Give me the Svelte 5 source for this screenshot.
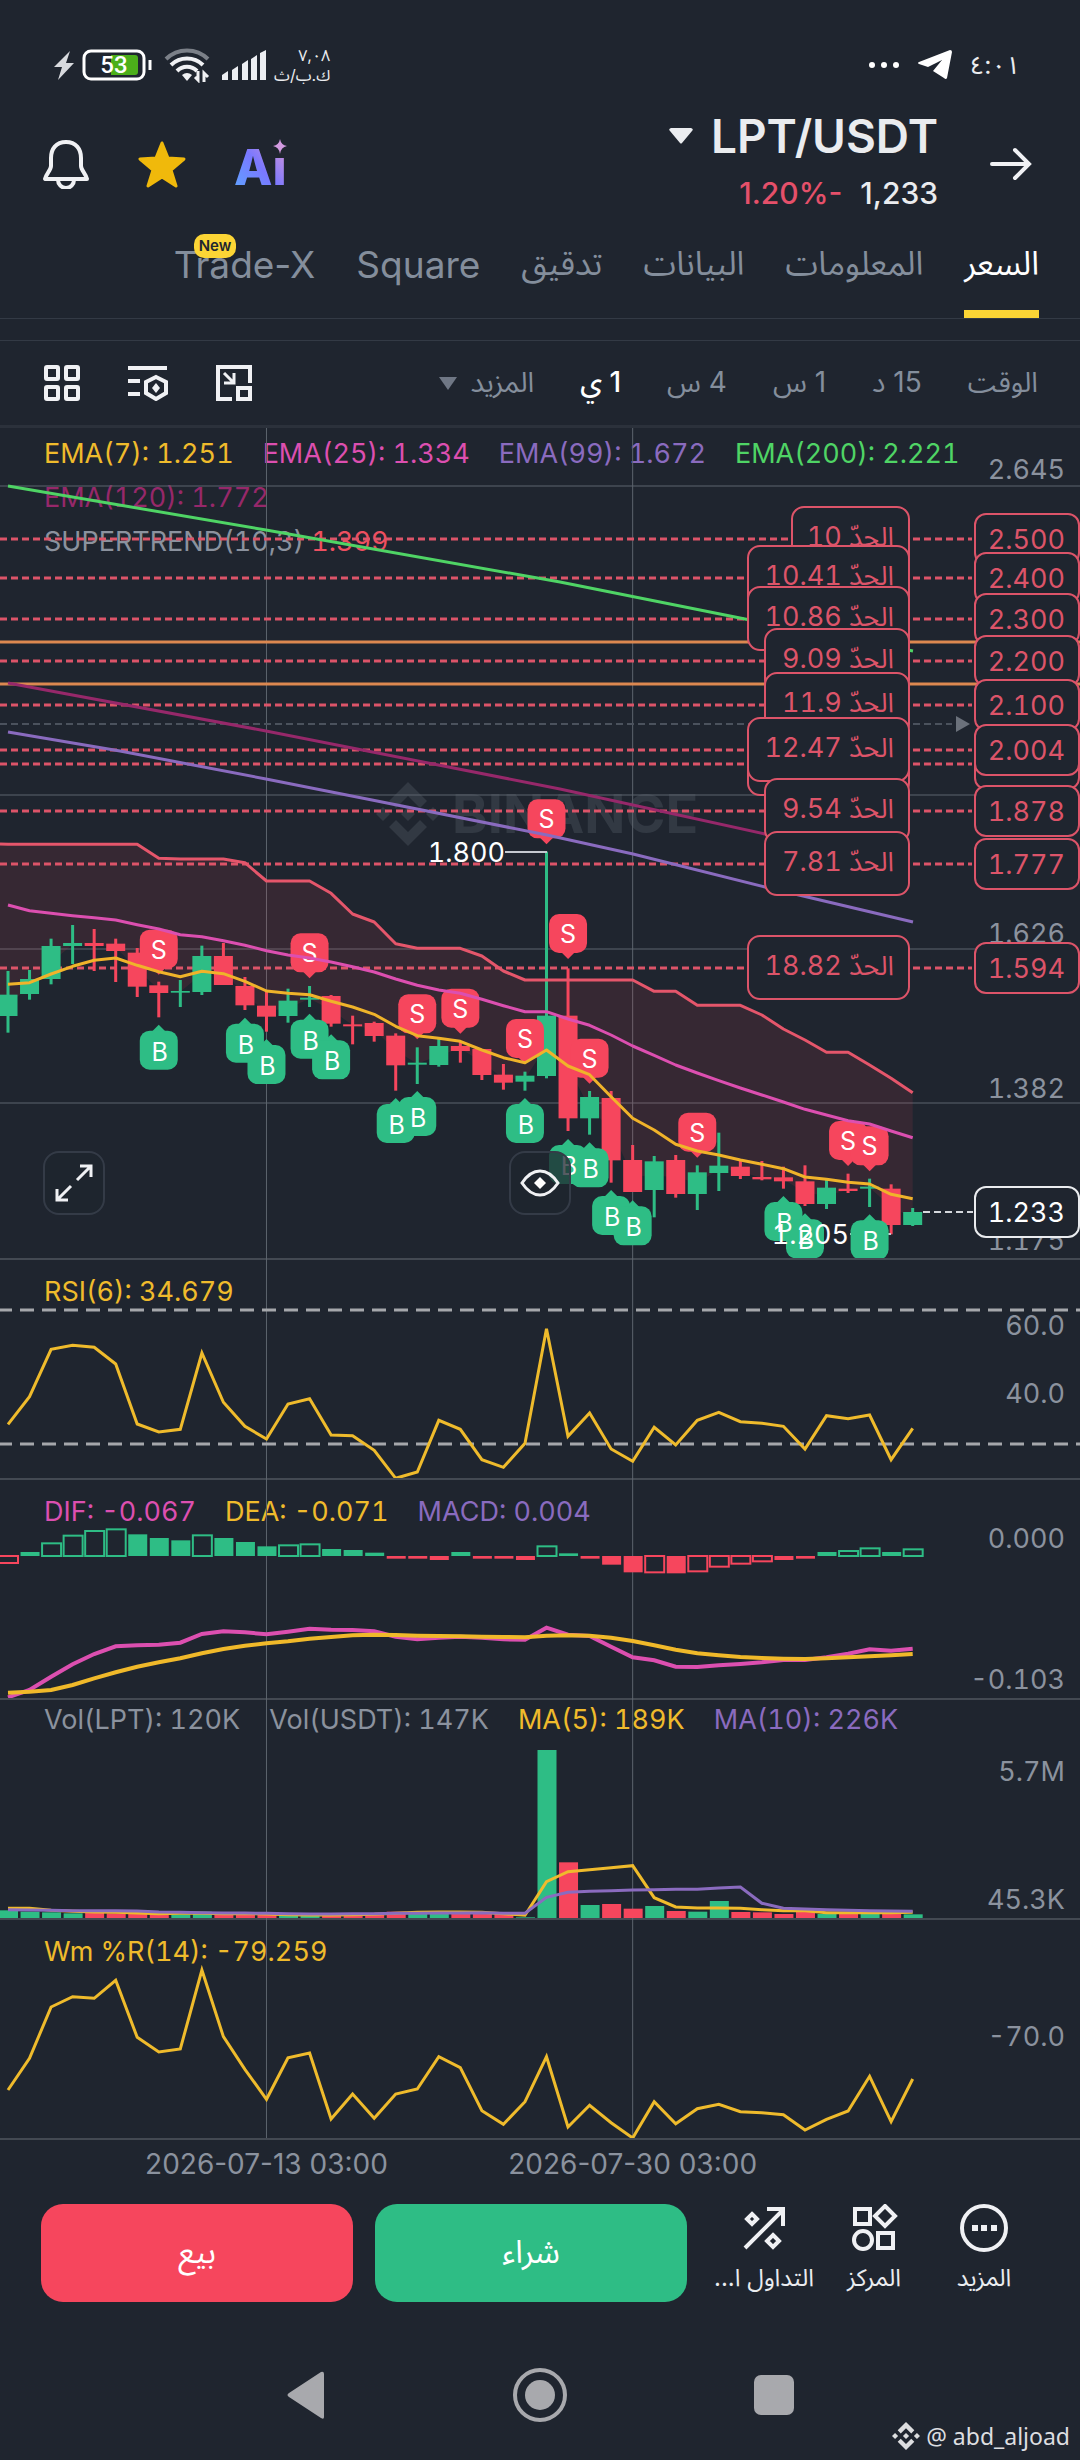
<script lang="ts">
  const STEP = 21.54;
  const x = (i: number) => 8 + i * STEP;

  // Series values are stored in thirds of a pixel, measured down the pane.
  const priceY = (v: number) => 372 + v / 3;
  const upperY = (v: number) => 2 + v / 3;
  const lowerY = (v: number) => v / 3 - 218;

  function line(values: number[], y: (v: number) => number): string {
    return values.map((v, i) => `${x(i).toFixed(1)},${y(v).toFixed(1)}`).join(' ');
  }

  const tabs = [
    { label: 'السعر' },
    { label: 'المعلومات' },
    { label: 'البيانات' },
    { label: 'تدقيق' },
    { label: 'Square', latin: true },
    { label: 'Trade-X', latin: true, isNew: true }
  ];
  const intervals = ['الوقت', '15 د', '1 س', '4 س', '1 ي'];

  let activeTab = $state('السعر');
  let activeInterval = $state('1 ي');

  // high, body top, body bottom, low, 1 = up
  const candles = [
    [513, 584, 648, 698, 1], [510, 537, 582, 599, 1], [416, 438, 537, 553, 1],
    [375, 429, 438, 492, 1], [387, 429, 438, 513, 0], [416, 431, 453, 546, 0],
    [444, 458, 560, 591, 0], [545, 556, 579, 652, 0], [540, 573, 578, 621, 1],
    [437, 468, 576, 585, 1], [429, 468, 555, 555, 0], [531, 558, 616, 630, 0],
    [575, 617, 650, 695, 0], [566, 602, 648, 668, 1], [558, 593, 599, 621, 1],
    [585, 588, 671, 680, 0], [647, 673, 679, 733, 0], [665, 669, 708, 725, 0],
    [700, 707, 796, 872, 0], [742, 788, 794, 852, 1], [715, 738, 795, 800, 1],
    [725, 738, 753, 788, 0], [747, 747, 825, 840, 0], [792, 824, 848, 869, 0],
    [815, 827, 845, 872, 1], [155, 647, 828, 835, 1], [505, 647, 955, 993, 0],
    [873, 891, 955, 1004, 1], [873, 894, 1081, 1148, 0], [1035, 1080, 1176, 1176, 0],
    [1068, 1084, 1170, 1252, 1], [1065, 1080, 1182, 1193, 0], [1096, 1117, 1182, 1230, 1],
    [998, 1097, 1119, 1173, 1], [1080, 1100, 1128, 1137, 0], [1083, 1131, 1138, 1141, 0],
    [1100, 1132, 1144, 1166, 0], [1096, 1144, 1212, 1218, 0], [1136, 1163, 1212, 1227, 1],
    [1121, 1166, 1173, 1179, 0], [1136, 1160, 1166, 1221, 1], [1153, 1166, 1275, 1303, 0],
    [1224, 1236, 1275, 1278, 1]
  ];

  const ema7 = [
    553, 548, 522, 499, 481, 474, 496, 515, 530, 514, 521, 544, 573, 580, 584, 604, 621, 643, 679,
    707, 715, 724, 750, 773, 788, 750, 798, 824, 890, 955, 990, 1033, 1053, 1065, 1080, 1093, 1106,
    1131, 1138, 1147, 1152, 1183, 1196
  ];
  const ema25 = [
    315, 332, 340, 347, 353, 360, 374, 387, 404, 410, 422, 436, 452, 465, 474, 486, 500, 516, 537,
    556, 570, 580, 598, 617, 635, 635, 657, 676, 705, 738, 766, 795, 819, 842, 864, 885, 906, 928,
    945, 962, 972, 993, 1013
  ];
  const supertrend = [
    133, 133, 133, 133, 133, 133, 133, 175, 177, 177, 177, 188, 243, 243, 243, 280, 342, 366, 431,
    445, 445, 445, 468, 513, 540, 540, 540, 540, 540, 540, 574, 574, 616, 616, 616, 645, 687, 720,
    757, 757, 795, 835, 878
  ];

  const trendLine = `0,416 ${line(supertrend, priceY)}`;
  const trendBase = candles
    .map((c, i) => `${x(i).toFixed(1)},${priceY((c[1] + c[2]) / 2).toFixed(1)}`)
    .reverse()
    .join(' ');
  const trendArea = `${trendLine} ${trendBase} 0,577`;

  const levels = [
    { y: 111, left: 792, label: 'الحدّ 10', price: '2.500' },
    { y: 150, left: 748, label: 'الحدّ 10.41', price: '2.400' },
    { y: 191, left: 748, label: 'الحدّ 10.86', price: '2.300' },
    { y: 233, left: 765, label: 'الحدّ 9.09', price: '2.200' },
    { y: 277, left: 765, label: 'الحدّ 11.9', price: '2.100' },
    { y: 336, left: 748, label: '', price: '' },
    { y: 322, left: 748, label: 'الحدّ 12.47', price: '2.004' },
    { y: 383, left: 765, label: 'الحدّ 9.54', price: '1.878' },
    { y: 436, left: 765, label: 'الحدّ 7.81', price: '1.777' },
    { y: 540, left: 748, label: 'الحدّ 18.82', price: '1.594' }
  ];

  // candle index, tip position
  const sells = [
    [7, 524], [14, 535], [19, 718], [21, 701], [24, 792], [25, 133], [26, 477], [27, 851],
    [32, 1073], [39, 1098], [40, 1114]
  ];
  const buys = [
    [7, 674], [11, 653], [12, 717], [14, 641], [15, 703], [18, 894], [19, 873], [24, 894],
    [26, 1017], [27, 1027], [28, 1170], [29, 1201], [36, 1188], [37, 1240], [40, 1243]
  ];

  const rsi = [
    493, 410, 268, 256, 262, 312, 492, 516, 508, 279, 427, 499, 537, 432, 416, 525, 527, 571, 655,
    636, 481, 508, 599, 622, 550, 206, 529, 459, 567, 604, 502, 555, 481, 457, 485, 490, 499, 567,
    467, 476, 465, 599, 505
  ];

  const MACD_ZERO = 888;
  // bar end, 1 = hollow
  const macdBars = [
    [909, 1], [876, 0], [850, 1], [827, 1], [813, 1], [808, 1], [823, 0], [834, 0], [841, 0],
    [826, 1], [834, 0], [846, 0], [859, 0], [856, 1], [853, 1], [867, 0], [870, 0], [878, 0],
    [896, 0], [896, 0], [900, 0], [876, 0], [896, 0], [896, 0], [900, 0], [859, 1], [880, 0],
    [896, 0], [914, 0], [937, 0], [937, 1], [940, 0], [934, 1], [920, 1], [911, 1], [904, 1],
    [900, 0], [896, 0], [876, 0], [873, 1], [865, 1], [876, 0], [868, 1]
  ];
  const dif = [
    1312, 1290, 1250, 1213, 1182, 1159, 1156, 1154, 1148, 1122, 1114, 1117, 1123, 1115, 1106, 1109,
    1110, 1114, 1130, 1138, 1133, 1130, 1133, 1138, 1139, 1103, 1124, 1128, 1160, 1192, 1201, 1220,
    1221, 1216, 1212, 1207, 1200, 1200, 1192, 1181, 1168, 1172, 1166
  ];
  const dea = [
    1298, 1295, 1290, 1275, 1255, 1237, 1220, 1207, 1195, 1180, 1167, 1157, 1150, 1144, 1136, 1131,
    1126, 1124, 1125, 1127, 1128, 1129, 1130, 1131, 1132, 1127, 1126, 1127, 1133, 1143, 1156, 1169,
    1180, 1186, 1191, 1194, 1196, 1197, 1195, 1192, 1189, 1186, 1182
  ];

  const VOLUME_BASE = 654;
  const volumes = [
    631, 635, 637, 640, 638, 640, 641, 642, 643, 635, 642, 642, 642, 644, 645, 645, 640, 640, 635,
    638, 640, 638, 636, 642, 652, 150, 487, 615, 612, 626, 618, 633, 635, 603, 636, 637, 642, 636,
    642, 637, 642, 637, 643
  ];
  const ma5 = [
    625, 625, 631, 634, 636, 637, 639, 641, 640, 640, 641, 641, 642, 644, 645, 645, 644, 643, 640,
    637, 636, 636, 637, 641, 646, 545, 515, 509, 503, 497, 593, 621, 624, 624, 625, 629, 632, 632,
    638, 638, 638, 638, 637
  ];
  const ma10 = [
    629, 630, 631, 632, 632, 632, 633, 636, 637, 638, 639, 639, 640, 641, 642, 642, 641, 641, 640,
    640, 639, 639, 638, 640, 640, 592, 577, 574, 572, 570, 569, 568, 568, 564, 561, 610, 625, 627,
    629, 631, 632, 633, 634
  ];

  const williams = [
    1170, 1075, 921, 890, 895, 841, 1012, 1056, 1047, 810, 1010, 1108, 1198, 1073, 1059, 1257, 1182,
    1255, 1182, 1167, 1070, 1103, 1232, 1273, 1205, 1070, 1281, 1216, 1268, 1314, 1205, 1271, 1226,
    1213, 1235, 1238, 1244, 1290, 1258, 1233, 1129, 1265, 1137
  ];
</script>

{#snippet verticals(height: number)}
  <path class="grid" d="M{x(12)} 0V{height}M{x(29)} 0V{height}" />
{/snippet}

{#snippet binanceMark()}
  <path
    d="M32 0 51 19l-7 7-12-12-12 12-7-7zM7 25l7 7-7 7-7-7zM57 25l7 7-7 7-7-7zM32 25l7 7-7 7-7-7zM20 38l12 12 12-12 7 7-19 19-19-19z"
  />
{/snippet}

<main class="app">
  <div class="status-bar">
    <div class="status-group">
      <svg width="20" height="30" viewBox="0 0 20 30" fill="#d8dade"><path d="M16 1 0 17h8L4 30l16-17h-8z" /></svg>
      <svg class="battery" width="70" height="32" viewBox="0 0 70 32">
        <rect x="2" y="2" width="60" height="28" rx="7" fill="none" stroke="#fff" stroke-width="3" />
        <path d="M29 6h24a3 3 0 0 1 3 3v14a3 3 0 0 1-3 3H29z" fill="#4caf1a" />
        <path d="M68 11v10" stroke="#fff" stroke-width="3" />
        <text x="32" y="24" text-anchor="middle">53</text>
      </svg>
      <svg class="wifi" width="46" height="36" viewBox="0 0 46 36" fill="none" stroke="#f0f1f4" stroke-width="4">
        <path d="M2 12a30 30 0 0 1 42 0" stroke="#7b8088" />
        <path d="M7 18a23 23 0 0 1 32 0M13 24a14 14 0 0 1 20 0" />
        <path d="M18 28a8 8 0 0 1 10 0l-5 6z" fill="#f0f1f4" stroke="none" />
        <path d="M34 24v9l-3-3M40 35v-9l4 4" stroke-width="3" />
      </svg>
      <svg width="44" height="32" viewBox="0 0 44 32" fill="#eceef2">
        <path d="M0 26l6-4v9H0zM10 21l6-4v14h-6zM20 15l6-4v20h-6zM29 10l6-4v25h-6zM38 4l6-3v30h-6z" />
      </svg>
      <div class="net-speed">
        <span>٧,٠٨</span>
        <span>ك.ب/ث</span>
      </div>
    </div>
    <div class="status-group right">
      <svg width="32" height="8" viewBox="0 0 32 8" fill="#fff"><circle cx="4" cy="4" r="3" /><circle cx="16" cy="4" r="3" /><circle cx="28" cy="4" r="3" /></svg>
      <svg width="34" height="30" viewBox="0 0 34 30" fill="#fff">
        <path d="M32 0Q34 0 34 2L29 28Q28 30 26 28L15 21 24 10 10 17 1 14Q-1 13 1 12z" />
      </svg>
      <time>٤:٠١</time>
    </div>
  </div>

  <header class="header">
    <div class="actions">
      <button aria-label="Alerts">
        <svg width="48" height="50" viewBox="0 0 48 50" fill="none" stroke="#f0f1f4" stroke-width="4" stroke-linejoin="round">
          <path d="M24 3C14 3 9 10 9 19v8c0 4-5 8-6 13h42c-1-5-6-9-6-13v-8C39 10 34 3 24 3z" />
          <path d="M16 41a8 8 0 0 0 16 0" />
        </svg>
      </button>
      <button aria-label="Favourite">
        <svg width="48" height="48" viewBox="0 0 48 48" fill="#f0b90b" stroke="#f0b90b" stroke-width="3" stroke-linejoin="round">
          <path d="M24 3l6 15 16 1-13 11 5 16-14-9-14 9 5-16L2 19l16-1z" />
        </svg>
      </button>
      <button aria-label="Ai">
        <svg class="ai" width="56" height="64" viewBox="1 -7 56 64">
          <defs>
            <linearGradient id="ai-fill" x1="0" y1="1" x2="1" y2="0">
              <stop offset="0" stop-color="#5aa9ff" />
              <stop offset="0.5" stop-color="#7a78ff" />
              <stop offset="1" stop-color="#e59ad0" />
            </linearGradient>
          </defs>
          <text x="1" y="46" fill="url(#ai-fill)">Aı</text>
          <path d="M47 0q1 6 7 7-6 1-7 8-1-7-7-8 6-1 7-7z" fill="#d29ae0" />
        </svg>
      </button>
    </div>
    <div class="pair">
      <div class="pair-text">
        <h1>
          <svg width="24" height="16" viewBox="0 0 24 16" fill="#eaecef"><path d="M2 0h20q3 1 1 3L13 15q-1 1-2 0L1 3Q-1 1 2 0z" /></svg>
          LPT/USDT
        </h1>
        <p><span class="change">1.20%-</span><span>1,233</span></p>
      </div>
      <button aria-label="Back">
        <svg width="42" height="34" viewBox="0 0 42 34" fill="none" stroke="#f0f1f4" stroke-width="4" stroke-linecap="round">
          <path d="M2 17h36M25 3l14 14-14 14" />
        </svg>
      </button>
    </div>
  </header>

  <nav class="tabs" dir="rtl">
    {#each tabs as tab}
      <button
        class="tab"
        class:latin={tab.latin}
        class:active={tab.label === activeTab}
        onclick={() => (activeTab = tab.label)}
      >
        {tab.label}
        {#if tab.isNew}
          <span class="new-badge">New</span>
        {/if}
      </button>
    {/each}
  </nav>

  <div class="toolbar">
    <div class="tools">
      <button aria-label="Layout">
        <svg width="36" height="36" viewBox="0 0 36 36" fill="none" stroke="#f0f1f4" stroke-width="4">
          <rect x="2" y="2" width="12" height="12" rx="1" /><rect x="22" y="2" width="12" height="12" rx="1" />
          <rect x="2" y="22" width="12" height="12" rx="1" /><rect x="22" y="22" width="12" height="12" rx="1" />
        </svg>
      </button>
      <button aria-label="Indicators">
        <svg width="40" height="36" viewBox="0 0 40 36" fill="none" stroke="#f0f1f4" stroke-width="4">
          <path d="M0 3h39M0 16h12M0 29h12" />
          <path d="M28 12l10 5v11l-10 6-10-6V17z" />
          <path d="M28 18l4 5-4 5-4-5z" fill="#f0f1f4" stroke="none" />
        </svg>
      </button>
      <button aria-label="Float window">
        <svg width="36" height="36" viewBox="0 0 36 36" fill="none" stroke="#f0f1f4" stroke-width="4">
          <path d="M34 18V2H2v32h14" />
          <rect x="22" y="23" width="12" height="11" />
          <path d="M8 8l9 9M18 8v10H8" stroke-width="3" />
        </svg>
      </button>
    </div>
    <div class="intervals" dir="rtl">
      {#each intervals as interval}
        <button class:active={interval === activeInterval} onclick={() => (activeInterval = interval)}>
          {interval}
        </button>
      {/each}
      <button class="more">
        المزيد
        <svg width="18" height="13" viewBox="0 0 18 13" fill="#6f7785"><path d="M0 0h18L9 13z" /></svg>
      </button>
    </div>
  </div>

  <section class="pane">
    <div class="legend main-legend">
      <span class="yellow">EMA(7): 1.251</span>
      <span class="pink">EMA(25): 1.334</span>
      <span class="purple">EMA(99): 1.672</span>
      <span class="green">EMA(200): 2.221</span>
      <span class="wine">EMA(120): 1.772</span>
      <span class="trend">SUPERTREND(10,3) <b>1.399</b></span>
    </div>
    <svg class="plot" viewBox="0 0 1080 830">
      <g class="watermark">
        <g transform="translate(376 354)">{@render binanceMark()}</g>
        <text x="452" y="405">BINANCE</text>
      </g>
      <path class="grid" d="M0 58H1080M0 367H975M0 521H975M0 675H1080" />
      {@render verticals(830)}

      <polygon points={trendArea} fill="#f6465d" fill-opacity="0.11" />
      {#each levels as level}
        <path class="level" d="M0 {level.y}H972" />
      {/each}
      <path d="M0 296H952" stroke="#4b525d" stroke-width="2" stroke-dasharray="7 4" />
      <path d="M956 288l14 8-14 8z" fill="#6b717b" />

      {#each candles as [high, top, bottom, low, up], i}
        <g fill={up ? '#2ebd85' : '#f6465d'}>
          <rect x={x(i) - 1.5} y={priceY(high)} width="3" height={(low - high) / 3} />
          <rect x={x(i) - 9.5} y={priceY(top)} width="19" height={(bottom - top) / 3} />
        </g>
      {/each}

      <path d="M505 424H547M850 806H891" stroke="#c5c9d0" stroke-width="2" />

      {#each sells as [i, tip]}
        <g transform="translate({x(i)} {priceY(tip)})" fill="#f6465d">
          <path d="M0 0l-7-7h14z" />
          <rect x="-19" y="-45" width="38" height="39" rx="10" />
        </g>
      {/each}
      {#each buys as [i, tip]}
        <g transform="translate({x(i)} {priceY(tip)})" fill="#2ebd85">
          <path d="M0 0l-7 7h14z" />
          <rect x="-19" y="6" width="38" height="39" rx="10" />
        </g>
      {/each}
      <g class="marker-text">
        {#each sells as [i, tip]}
          <text x={x(i)} y={priceY(tip) - 16}>S</text>
        {/each}
        {#each buys as [i, tip]}
          <text x={x(i) + 1} y={priceY(tip) + 36}>B</text>
        {/each}
      </g>

      <g class="curve">
        <polyline points="8,58 266,102 560,154 745,191 913,223" stroke="#4fd465" />
        <path d="M0 214H1080M0 256H1080" stroke="#dc8850" />
        <polyline points="8,255 266,303 560,361 765,406 905,439" stroke="#96286a" />
        <polyline points="8,304 120,323 266,351 372,372 547,407 633,426 765,459 913,494" stroke="#8a6bbf" />
        <polyline points={trendLine} stroke="#e5566b" />
        <polyline points={line(ema25, priceY)} stroke="#dc4fb0" />
        <polyline points={line(ema7, priceY)} stroke="#f0b32a" />
      </g>

      <g class="note">
        <text x="505" y="434" text-anchor="end">1.800</text>
        <text x="849" y="816" text-anchor="end">1.205</text>
      </g>
      <g class="axis">
        <text x="1065" y="51">2.645</text>
        <text x="1065" y="515">1.626</text>
        <text x="1065" y="670">1.382</text>
        <text x="1065" y="822">1.175</text>
      </g>

      {#each levels as { y, left, label, price }}
        <g class="tag">
          <rect x={left} y={y - 32} width={909 - left} height="63" rx="12" />
          <text x="894" y={y + 7}>{label}</text>
          <rect x="975" y={y - 25} width="104" height="50" rx="11" />
          <text x="1065" y={y + 10}>{price}</text>
        </g>
      {/each}
      <path d="M923 784H973" stroke="#d5d8dd" stroke-width="2" stroke-dasharray="7 4" />
      <g class="tag current">
        <rect x="975" y="759" width="104" height="50" rx="11" />
        <text x="1065" y="794">1.233</text>
      </g>
    </svg>
    <div class="chart-buttons">
      <button class="float-button" aria-label="Full screen">
        <svg width="40" height="40" viewBox="0 0 40 40" fill="none" stroke="#f0f1f4" stroke-width="3">
          <path d="M23 17L37 3M26 3h11v11M17 23L3 37M3 26v11h11" />
        </svg>
      </button>
      <button class="float-button" aria-label="Show marks">
        <svg width="40" height="28" viewBox="0 0 40 28" fill="none" stroke="#f0f1f4" stroke-width="3">
          <path d="M2 14Q10 2 20 2t18 12Q30 26 20 26T2 14z" />
          <path d="M20 8l6 6-6 6-6-6z" fill="#fff" stroke="none" />
        </svg>
      </button>
    </div>
  </section>

  <section class="pane">
    <div class="legend"><span class="yellow">RSI(6): 34.679</span></div>
    <svg class="plot" viewBox="0 0 1080 220">
      {@render verticals(220)}
      <path d="M-2 52H1080M-2 186H1080" stroke="#a5a7ab" stroke-width="3" stroke-dasharray="14 8" />
      <polyline class="thin" points={line(rsi, upperY)} />
      <g class="axis">
        <text x="1065" y="77">60.0</text>
        <text x="1065" y="145">40.0</text>
      </g>
    </svg>
  </section>

  <section class="pane">
    <div class="legend">
      <span class="pink">DIF: -0.067</span>
      <span class="yellow">DEA: -0.071</span>
      <span class="purple">MACD: 0.004</span>
    </div>
    <svg class="plot" viewBox="0 0 1080 220">
      {@render verticals(220)}
      {#each macdBars as [end, hollow], i}
        {@const color = end < MACD_ZERO ? '#2ebd85' : '#f6465d'}
        {@const top = lowerY(Math.min(end, MACD_ZERO))}
        {@const height = Math.abs(end - MACD_ZERO) / 3}
        {#if hollow}
          <rect x={x(i) - 9} y={top} width="19" {height} fill="#1f252f" stroke={color} stroke-width="2" />
        {:else}
          <rect x={x(i) - 9} y={top} width="19" {height} fill={color} />
        {/if}
      {/each}
      <polyline points={line(dif, lowerY)} fill="none" stroke="#dc4fb0" stroke-width="4" />
      <polyline points={line(dea, lowerY)} fill="none" stroke="#f0b92a" stroke-width="4" />
      <g class="axis">
        <text x="1065" y="70">0.000</text>
        <text x="1065" y="211">-0.103</text>
      </g>
    </svg>
  </section>

  <section class="pane">
    <div class="legend tight">
      <span class="grey">Vol(LPT): 120K</span>
      <span class="grey">Vol(USDT): 147K</span>
      <span class="yellow">MA(5): 189K</span>
      <span class="purple">MA(10): 226K</span>
    </div>
    <svg class="plot" viewBox="0 0 1080 220">
      {@render verticals(220)}
      {#each volumes as v, i}
        <rect
          x={x(i) - 9}
          y={upperY(v)}
          width="19"
          height={(VOLUME_BASE - v) / 3}
          fill={candles[i][4] ? '#2ebd85' : '#f6465d'}
        />
      {/each}
      <polyline class="thin" points={line(ma5, upperY)} />
      <polyline points={line(ma10, upperY)} fill="none" stroke="#8a6bbf" stroke-width="3" />
      <g class="axis">
        <text x="1065" y="83">5.7M</text>
        <text x="1065" y="211">45.3K</text>
      </g>
    </svg>
  </section>

  <section class="pane">
    <div class="legend"><span class="yellow">Wm %R(14): -79.259</span></div>
    <svg class="plot" viewBox="0 0 1080 220">
      {@render verticals(220)}
      <polyline class="thin" points={line(williams, lowerY)} />
      <g class="axis"><text x="1065" y="128">-70.0</text></g>
    </svg>
  </section>
  <svg class="plot dates" viewBox="0 0 1080 66">
    <text x={x(12)} y="36">2026-07-13 03:00</text>
    <text x={x(29)} y="36">2026-07-30 03:00</text>
  </svg>

  <div class="trade-bar">
    <button class="trade sell">بيع</button>
    <button class="trade buy">شراء</button>
    <div class="shortcuts">
      <button>
        <svg width="48" height="48" viewBox="0 0 48 48" fill="none" stroke="#f0f1f4" stroke-width="4">
          <path d="M5 44L42 7M27 5h16v17" />
          <path d="M12 10l5 5-5 5-5-5zM33 31l6 6-6 6-6-6z" />
        </svg>
        <span dir="rtl">التداول ا...</span>
      </button>
      <button>
        <svg width="48" height="48" viewBox="0 0 48 48" fill="none" stroke="#f0f1f4" stroke-width="4">
          <rect x="5" y="5" width="15" height="15" /><path d="M35 2l10 10-10 10-10-10z" />
          <circle cx="13" cy="36" r="9" /><rect x="28" y="29" width="15" height="15" />
        </svg>
        <span dir="rtl">المركز</span>
      </button>
      <button>
        <svg width="48" height="48" viewBox="0 0 48 48" fill="none" stroke="#f0f1f4" stroke-width="4">
          <circle cx="24" cy="24" r="22" />
          <path d="M12 24h6M21 24h6M31 24h6" stroke-width="6" />
        </svg>
        <span dir="rtl">المزيد</span>
      </button>
    </div>
  </div>

  <div class="system-nav">
    <button aria-label="System back">
      <svg width="54" height="54" viewBox="0 0 54 54" fill="#a8a9ad"><path d="M45 6v43q0 3-3 1L10 29q-3-2 0-4L42 4q3-1 3 2z" /></svg>
    </button>
    <button aria-label="System home">
      <svg width="54" height="54" viewBox="0 0 54 54" fill="#a8a9ad"><circle cx="27" cy="27" r="25" fill="none" stroke="#a8a9ad" stroke-width="4" /><circle cx="27" cy="27" r="15" /></svg>
    </button>
    <button aria-label="System recents">
      <svg width="54" height="54" viewBox="0 0 54 54" fill="#a8a9ad"><rect x="7" y="7" width="40" height="40" rx="7" /></svg>
    </button>
  </div>

  <footer class="author">
    <svg width="28" height="28" viewBox="0 0 64 64" fill="#dddee0">{@render binanceMark()}</svg>
    <span>@ abd_aljoad</span>
  </footer>
</main>

<style>
  :global(body) {
    background: #1f252f;
  }

  .app {
    overflow: hidden;
    background: #1f252f;
    color: #eaecef;
    font-family: Inter, 'Noto Sans Arabic', 'DejaVu Sans', sans-serif;
    font-size: 27px;
  }

  svg {
    display: block;
    flex: none;
  }

  button {
    margin: 0;
    padding: 0;
    border: 0;
    background: none;
    color: inherit;
    font: inherit;
    cursor: pointer;
  }

  .status-bar {
    display: flex;
    justify-content: space-between;
    align-items: center;
    height: 50px;
    padding: 40px 60px 0 54px;
  }

  .status-group {
    display: flex;
    align-items: center;
    gap: 8px;
  }

  .status-group.right {
    gap: 18px;
  }

  .battery text {
    fill: #fff;
    font: 500 24px Roboto, sans-serif;
  }

  .wifi {
    margin: 0 4px;
  }

  .net-speed {
    display: flex;
    flex-direction: column;
    align-items: flex-end;
    font-size: 16px;
    line-height: 20px;
  }

  time {
    font-size: 25px;
    line-height: 32px;
  }

  .header {
    display: flex;
    justify-content: space-between;
    align-items: center;
    height: 132px;
    padding: 8px 48px 0 42px;
  }

  .actions {
    display: flex;
    align-items: center;
    gap: 48px;
  }

  .ai text {
    font-size: 50px;
    font-weight: 800;
  }

  .pair {
    display: flex;
    align-items: center;
    gap: 52px;
  }

  .pair-text {
    display: flex;
    flex-direction: column;
    align-items: flex-end;
  }

  h1 {
    display: flex;
    align-items: center;
    gap: 18px;
    margin: 0;
    font-size: 46px;
    font-weight: 600;
    line-height: 58px;
  }

  .pair-text p {
    display: flex;
    gap: 18px;
    margin: 0;
    font-size: 30px;
    font-weight: 500;
    line-height: 56px;
  }

  .change {
    color: #e5506a;
  }

  .tabs {
    display: flex;
    gap: 41px;
    height: 88px;
    padding: 0 41px;
    border-bottom: 1px solid #333a45;
  }

  .tab {
    position: relative;
    padding-bottom: 12px;
    border-bottom: 8px solid transparent;
    color: #848e9c;
    font-size: 33px;
    white-space: nowrap;
  }

  .tab.latin {
    font-size: 37px;
  }

  .tab.active {
    border-color: #fcd535;
    color: #fff;
  }

  .new-badge {
    position: absolute;
    top: 4px;
    left: 20px;
    padding: 0 5px;
    border-radius: 10px;
    background: #fcd535;
    color: #202630;
    font-size: 15px;
    font-weight: 600;
    line-height: 24px;
  }

  .toolbar {
    display: flex;
    justify-content: space-between;
    align-items: center;
    height: 84px;
    margin-top: 21px;
    padding: 0 42px 0 44px;
    border-top: 1px solid #333a45;
    border-bottom: 3px solid #2b313b;
  }

  .tools {
    display: flex;
    gap: 48px;
  }

  .intervals {
    display: flex;
    gap: 46px;
    color: #848e9c;
    font-size: 28px;
  }

  .intervals .active {
    color: #fff;
    font-weight: 500;
  }

  .more {
    display: flex;
    align-items: center;
    gap: 14px;
  }

  .pane {
    display: grid;
    border-bottom: 2px solid #434952;
    margin-bottom: -2px;
    font-variant-numeric: tabular-nums;
  }

  .pane > * {
    grid-area: 1 / 1;
    min-width: 0;
  }

  .plot {
    width: 100%;
    height: auto;
  }

  .legend {
    display: flex;
    flex-wrap: wrap;
    align-content: flex-start;
    column-gap: 29px;
    padding: 12px 44px 0;
    line-height: 44px;
  }

  .main-legend {
    padding-top: 4px;
  }

  .tight {
    padding-top: 0;
  }

  .trend {
    flex-basis: 100%;
    color: #8b929e;
  }

  .trend b {
    color: #ee4f60;
    font-weight: 400;
  }

  .yellow {
    color: #efbb2c;
  }

  .pink {
    color: #dc4fb0;
  }

  .purple {
    color: #8a6bbf;
  }

  .green {
    color: #4fd465;
  }

  .wine {
    color: #96286a;
  }

  .grey {
    color: #8b929e;
  }

  .grid {
    fill: none;
    stroke: #5d646e;
    stroke-width: 1;
  }

  .watermark {
    fill: #323943;
    font-size: 54px;
    font-weight: 700;
  }

  .level {
    stroke: #dc5469;
    stroke-width: 3;
    stroke-dasharray: 7 4;
  }

  .curve {
    fill: none;
    stroke-width: 3;
    stroke-linejoin: round;
  }

  .thin {
    fill: none;
    stroke: #efbb2c;
    stroke-width: 3;
  }

  .marker-text {
    fill: #fff;
    font-size: 25px;
    text-anchor: middle;
  }

  .note {
    fill: #fff;
  }

  .axis {
    fill: #8b929e;
    text-anchor: end;
  }

  .tag rect {
    fill: #1f252f;
    stroke: #dc5469;
    stroke-width: 2;
  }

  .tag text {
    fill: #dc5469;
    text-anchor: end;
  }

  .current rect {
    stroke: #eaecef;
  }

  .current text {
    fill: #fff;
  }

  .chart-buttons {
    display: grid;
    grid-template-columns: 1fr auto 1fr;
    align-self: end;
    justify-items: start;
    padding: 0 43px 43px;
  }

  .float-button {
    display: grid;
    place-items: center;
    width: 62px;
    height: 64px;
    border: 2px solid #343b47;
    border-radius: 16px;
    background: rgba(31, 37, 47, 0.75);
  }

  .dates {
    fill: #8b929e;
    font-size: 28px;
    text-anchor: middle;
  }

  .trade-bar {
    display: flex;
    gap: 22px;
    padding: 0 41px;
  }

  .trade {
    flex: 1;
    height: 98px;
    border-radius: 22px;
    color: #fff;
    font-size: 32px;
  }

  .sell {
    background: #f6465d;
  }

  .buy {
    background: #2ebd85;
  }

  .shortcuts {
    display: grid;
    grid-template-columns: repeat(3, 110px);
  }

  .shortcuts button {
    display: flex;
    flex-direction: column;
    align-items: center;
    gap: 8px;
    font-size: 24px;
    line-height: 36px;
    white-space: nowrap;
  }

  .system-nav {
    display: flex;
    justify-content: center;
    gap: 180px;
    padding: 66px 0 0;
  }

  .author {
    display: flex;
    justify-content: flex-end;
    align-items: center;
    gap: 6px;
    padding: 0 10px 10px;
    color: #dddee0;
    font: 23px/24px 'Noto Sans', sans-serif;
  }
</style>
